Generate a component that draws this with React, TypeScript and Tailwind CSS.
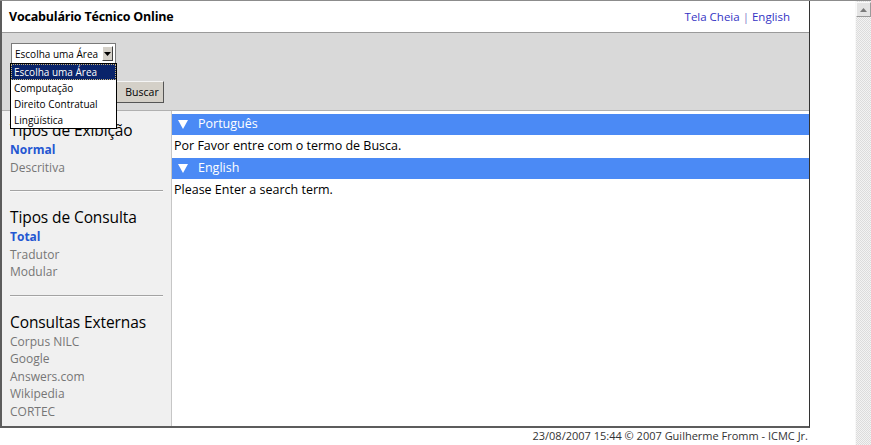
import { useState } from 'react';

const areas = ['Escolha uma Área', 'Computação', 'Direito Contratual', 'Lingüística'];

const sections = [
  {
    title: 'Tipos de Exibição',
    items: [
      { label: 'Normal', active: true },
      { label: 'Descritiva' },
    ],
  },
  {
    title: 'Tipos de Consulta',
    items: [
      { label: 'Total', active: true },
      { label: 'Tradutor' },
      { label: 'Modular' },
    ],
  },
  {
    title: 'Consultas Externas',
    items: [
      { label: 'Corpus NILC' },
      { label: 'Google' },
      { label: 'Answers.com' },
      { label: 'Wikipedia' },
      { label: 'CORTEC' },
    ],
  },
];

const results = [
  { lang: 'Português', text: 'Por Favor entre com o termo de Busca.' },
  { lang: 'English', text: 'Please Enter a search term.' },
];

function Divider() {
  return <div className="mx-[8px] my-[14px] border-t border-t-[#a3a3a3] border-b border-b-[#fafafa]" />;
}

export default function App() {
  const [selected] = useState(0);

  return (
    <div className="relative w-[871px] h-[445px] overflow-hidden bg-white border-t border-[#8c8c8c] font-['Open_Sans',sans-serif] text-black">
      <div className="flex h-full">
        {/* page box */}
        <div className="w-[810px] shrink-0 flex flex-col">
          <div className="h-[427px] flex flex-col border-l-2 border-l-[#5c5c5c] border-r border-r-[#333] border-b-2 border-b-[#5c5c5c]">
            {/* header */}
            <div className="h-[32px] shrink-0 flex items-center justify-between pl-[7px] pr-[19px] pt-[1px] border-b border-[#9a9a9a]">
              <span className="text-[12.5px] font-bold tracking-[-0.2px]">Vocabulário Técnico Online</span>
              <span className="text-[11.5px] text-[#3434c4]">
                Tela Cheia <span className="text-[#8080c8]">|</span> English
              </span>
            </div>

            {/* search band */}
            <div className="relative h-[78px] shrink-0 bg-[#d9d9d9] border-b border-[#b0b0b0] pl-[9px] pt-[10px]">
              <div className="flex h-[21px] w-[105px] items-center bg-white border border-[#7a7a7a]">
                <span className="flex-1 pl-[3px] text-[10px] leading-none whitespace-nowrap">{areas[selected]}</span>
                <span className="mr-[2px] flex h-[15px] w-[11px] items-center justify-center bg-[#d4d0c8] border border-t-white border-l-white border-r-[#404040] border-b-[#404040]">
                  <svg width="7" height="4" viewBox="0 0 7 4"><path d="M0 0h7L3.5 4z" fill="#000" /></svg>
                </span>
              </div>
              <div className="mt-[17px] flex items-center gap-[2px]">
                <div className="h-[20px] w-[103px] bg-white border border-[#7a7a7a]" />
                <button className="h-[22px] w-[48px] bg-[#d4d0c8] border border-t-[#f5f5f5] border-l-[#f5f5f5] border-r-[#555] border-b-[#555] text-[10.5px] leading-none pl-[4px]">
                  Buscar
                </button>
              </div>

              {/* open select list */}
              <ul className="absolute left-[8px] top-[30px] z-10 w-[107px] bg-white border border-black text-[10px] leading-[16px]">
                {areas.map((a, i) => (
                  <li
                    key={a}
                    className={
                      i === selected
                        ? 'h-[16px] pl-[2px] bg-[#0a246a] text-white border border-dotted border-[#c9b37a]'
                        : 'h-[16px] pl-[3px]'
                    }
                  >
                    <span className={i === selected ? 'relative -top-[1px]' : ''}>{a}</span>
                  </li>
                ))}
              </ul>
            </div>

            {/* body */}
            <div className="flex flex-1 min-h-0">
              <aside className="w-[170px] shrink-0 bg-[#f0f0f0] border-r border-[#c6c6c6] pt-[8px]">
                {sections.map((s, si) => (
                  <div key={s.title}>
                    {si > 0 && <Divider />}
                    <div className="px-[8px]">
                      <h3 className="text-[15.5px] leading-[22px] tracking-[-0.1px]">{s.title}</h3>
                      <ul className="text-[12px] leading-[17.5px]">
                        {s.items.map((it) => (
                          <li
                            key={it.label}
                            className={it.active ? 'font-bold text-[#2457d2]' : 'text-[#767676]'}
                          >
                            {it.label}
                          </li>
                        ))}
                      </ul>
                    </div>
                  </div>
                ))}
              </aside>

              <main className="flex-1 pt-[3px]">
                {results.map((r) => (
                  <div key={r.lang}>
                    <div className="h-[21px] flex items-center bg-[#4b8af5] text-white text-[12.5px] pl-[6px]">
                      <svg width="10" height="9" viewBox="0 0 10 9" className="mr-[10px]">
                        <path d="M0 0h10L5 9z" fill="#fff" />
                      </svg>
                      {r.lang}
                    </div>
                    <div className="h-[23px] flex items-center pl-[2px] text-[12.5px]">{r.text}</div>
                  </div>
                ))}
              </main>
            </div>
          </div>

          {/* footer */}
          <div className="flex-1 flex items-center justify-end pr-[2px] text-[11px] text-[#333]">
            23/08/2007 15:44 © 2007 Guilherme Fromm - ICMC Jr.
          </div>
        </div>

        <div className="flex-1" />

        {/* scrollbar */}
        <div className="w-[16px] shrink-0 flex flex-col bg-[repeating-conic-gradient(#dcdcdc_0_25%,#f3f3f3_0_50%)] bg-[length:2px_2px] border-l border-[#f8f8f8]">
          <div className="mt-[1px] h-[15px] flex items-center justify-center bg-[#e4e4e4] border border-t-[#fafafa] border-l-[#fafafa] border-r-[#9a9a9a] border-b-[#9a9a9a]">
            <svg width="7" height="4" viewBox="0 0 7 4"><path d="M0 4h7L3.5 0z" fill="#7a7a7a" /></svg>
          </div>
        </div>
      </div>
    </div>
  );
}
